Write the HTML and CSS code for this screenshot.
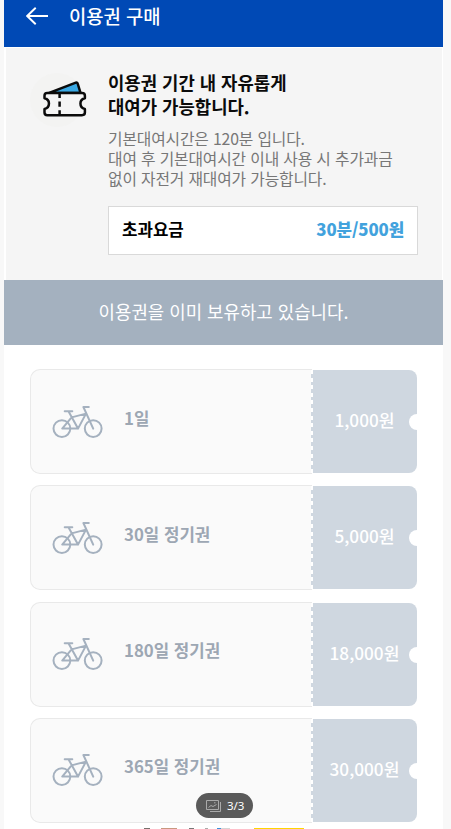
FILE: index.html
```html
<!DOCTYPE html>
<html lang="ko">
<head>
    <meta charset="UTF-8">
    <meta name="viewport" content="width=device-width, initial-scale=1.0">
    <title>이용권 구매</title>
    <link rel="stylesheet" href="styles.css">
</head>
<body>
    <!-- Shared bike icon -->
    <svg width="0" height="0" class="defs">
        <symbol id="bike" viewBox="0 0 52 34">
            <g fill="none" stroke="#a5b1bf" stroke-width="2" stroke-linecap="round" stroke-linejoin="round">
                <circle cx="9.9" cy="23.6" r="8.4"/>
                <circle cx="41.2" cy="23.6" r="8.4"/>
                <path d="M12.7 6.2h7.6M16.6 6.4L26 23.6H10.2L19.6 12.4L34 8.6L26 23.6"/>
                <path d="M36.8 2h-5.4L41.2 23.6"/>
            </g>
        </symbol>
    </svg>

    <div class="app">
        <header class="header">
            <svg class="back" viewBox="0 0 22 18" fill="none" stroke="#fff" stroke-width="1.9">
                <path d="M22 9H1.2M9.7 0.7L1.2 9L9.7 17.3"/>
            </svg>
            <h1>이용권 구매</h1>
        </header>

        <section class="info">
            <div class="info-icon">
                <svg viewBox="0 0 46 36" fill="none" stroke="#0b0b0b" stroke-width="2.5" stroke-linejoin="round" stroke-linecap="round">
                    <path d="M5.5 12.1L32.2 1.8Q34.2 1 34.8 3L37.6 12.1Z" fill="#3ba9e4"/>
                    <path fill="#f5f5f5" d="M4.2 12.1H39Q41.9 12.1 41.9 14.8V17.2A5.5 5.5 0 0 0 41.9 28V31.6Q41.9 34.2 39 34.2H4.2Q1.5 34.2 1.5 31.6V28A5.5 5.5 0 0 0 1.5 17.2V14.8Q1.5 12.1 4.2 12.1Z"/>
                    <path d="M16.6 13V17M16.6 20.5V25.7M16.6 29.3V33" stroke-linecap="butt"/>
                </svg>
            </div>
            <div class="info-body">
                <h2>이용권 기간 내 자유롭게<br>대여가 가능합니다.</h2>
                <p>기본대여시간은 120분 입니다.<br>대여 후 기본대여시간 이내 사용 시 추가과금<br>없이 자전거 재대여가 가능합니다.</p>
                <div class="fee">
                    <span>초과요금</span>
                    <strong>30분/500원</strong>
                </div>
            </div>
        </section>

        <div class="notice">이용권을 이미 보유하고 있습니다.</div>

        <div class="tickets">
            <div class="ticket">
                <div class="ticket-name"><svg class="bike"><use href="#bike"/></svg><span>1일</span></div>
                <div class="ticket-price">1,000원</div>
            </div>
            <div class="ticket">
                <div class="ticket-name"><svg class="bike"><use href="#bike"/></svg><span>30일 정기권</span></div>
                <div class="ticket-price">5,000원</div>
            </div>
            <div class="ticket">
                <div class="ticket-name"><svg class="bike"><use href="#bike"/></svg><span>180일 정기권</span></div>
                <div class="ticket-price">18,000원</div>
            </div>
            <div class="ticket">
                <div class="ticket-name"><svg class="bike"><use href="#bike"/></svg><span>365일 정기권</span></div>
                <div class="ticket-price">30,000원</div>
            </div>
        </div>
    </div>

    <div class="banner-edge"></div>

    <div class="pager">
        <svg viewBox="0 0 15 12" fill="none" stroke="#aaa" stroke-width="1">
            <path d="M0.5 0.5H12.5V9.5H0.5ZM14.5 2V11.5H4M2.5 7.5L5 5.5L7 6.5L10.5 4.5M8 2.8h1.5"/>
        </svg>
        <span>3/3</span>
    </div>
</body>
</html>
```

FILE: styles.css
```css
* {
    margin: 0;
    padding: 0;
    box-sizing: border-box;
}

body {
    background-color: #f8f8f8;
    font-family: "Noto Sans CJK KR", "Noto Sans", sans-serif;
    height: 829px;
    overflow: hidden;
}

.defs {
    position: absolute;
}

.app {
    width: 439px;
    height: 829px;
    margin-left: 4px;
    background: #fff;
}

/* Top bar */
.header {
    display: flex;
    align-items: flex-start;
    height: 47px;
    padding-left: 22px;
    background: #0049b5;
    color: #fff;
}

.back {
    width: 22px;
    height: 18px;
    margin-top: 7px;
}

.header h1 {
    margin-left: 21px;
    font-size: 18.8px;
    line-height: 32px;
    font-weight: 500;
}

/* Guide */
.info {
    display: flex;
    height: 232px;
    margin: 1px 1px 0 2px;
    background: #f5f5f5;
}

.info-icon {
    width: 54px;
    height: 54px;
    margin: 25px 0 0 24px;
    padding: 8px 0 0 13px;
    border-radius: 50%;
    background: #f3f3f2;
}

.info-icon svg {
    display: block;
    width: 46px;
    height: 36px;
}

.info-body {
    width: 310px;
    margin-left: 24px;
    padding-top: 22px;
}

.info h2 {
    font-size: 17.8px;
    line-height: 24px;
    font-weight: 700;
    color: #0b0b0b;
}

.info p {
    margin-top: 11px;
    font-size: 15.8px;
    line-height: 20.2px;
    color: #777;
    white-space: nowrap;
    letter-spacing: -0.15px;
}

.fee {
    display: flex;
    justify-content: space-between;
    align-items: center;
    height: 49px;
    margin-top: 16.4px;
    padding: 0 13px 3px;
    border: 1px solid #d9d9d9;
    background: #fff;
    font-size: 16.8px;
    font-weight: 700;
    color: #000;
}

.fee strong {
    color: #42a2dd;
    letter-spacing: -0.1px;
}

.notice {
    height: 65px;
    background: #a4b1bf;
    color: #fff;
    font-size: 17.85px;
    line-height: 62px;
    text-align: center;
}

/* Ticket list */
.tickets {
    display: flex;
    flex-direction: column;
    gap: 11.3px;
    padding: 24px 26px 0;
}

.ticket {
    display: flex;
    align-items: center;
    height: 105px;
}

.ticket-name {
    display: flex;
    align-items: center;
    width: 282px;
    height: 105px;
    padding-left: 21px;
    border: 1px solid #e9e9e9;
    border-right: none;
    border-radius: 10px 0 0 10px;
    background: #fafafa;
    color: #9da7b3;
    font-size: 16.8px;
    font-weight: 700;
}

.ticket-name span {
    margin-left: 20px;
    padding-bottom: 8px;
}

.bike {
    width: 52px;
    height: 34px;
}

.ticket-price {
    position: relative;
    width: 105px;
    height: 103px;
    border-radius: 0 8px 8px 0;
    background: #cfd7e0;
    color: #fff;
    font-size: 17.2px;
    font-weight: 500;
    line-height: 99px;
    text-align: center;
}

/* Perforated edge */
.ticket-price::before {
    content: "";
    position: absolute;
    left: -1px;
    top: 0;
    width: 2px;
    height: 103px;
    background: repeating-linear-gradient(#fff 0 4px, #cfd7e0 4px 7.6px);
}

.ticket-price::after {
    content: "";
    position: absolute;
    right: -8px;
    top: 44px;
    width: 16px;
    height: 16px;
    border-radius: 50%;
    background: #fff;
}

/* Top of the banner below the fold */
.banner-edge {
    position: absolute;
    left: 144px;
    top: 828px;
    width: 160px;
    height: 1px;
    background: linear-gradient(90deg, #77706c 0 6px, #fff 6px 17px, #c99880 17px 33px, #fff 33px 45px, #777 45px 50px, #fff 50px 61px, #aaa 61px 64px, #fff 64px 73px, #3d8fdb 73px 77px, #d5d5d5 77px 86px, #fff 86px 110px, #ffd500 110px 160px);
}

.pager {
    position: absolute;
    left: 196px;
    top: 793px;
    display: flex;
    align-items: center;
    width: 57px;
    height: 25px;
    padding-left: 10px;
    border-radius: 13px;
    background: #5a5a5a;
    color: #fff;
    font-family: "Noto Sans", sans-serif;
    font-size: 11.5px;
}

.pager svg {
    width: 15px;
    height: 12px;
    margin-right: 6px;
}
```
